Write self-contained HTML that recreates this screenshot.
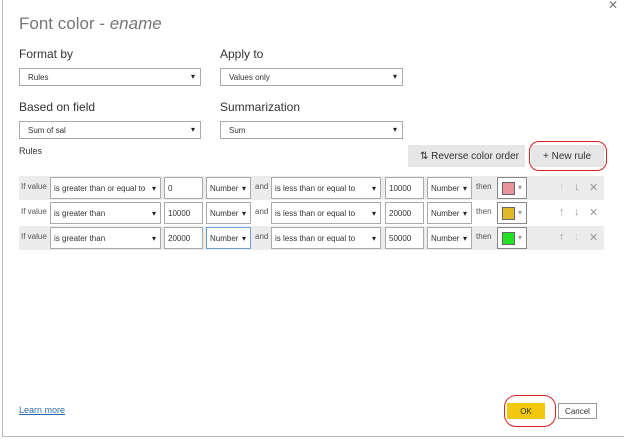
<html><head><style>
body{margin:0;width:624px;height:440px;background:#fff;font-family:"Liberation Sans",sans-serif;position:relative;overflow:hidden;color:#333}
div,span{position:absolute;box-sizing:border-box}
.lbl{font-size:12px;color:#333}
.dd{border:1px solid #aaa;background:#fff;font-size:8px;padding:4px 0 0 8px;color:#333;height:18px}
.dd:after{content:"▾";position:absolute;right:5px;top:3px;font-size:8px;color:#222}
.sm{border:1px solid #aaa;background:#fff;font-size:8px;color:#333;height:22px;padding:6px 0 0 3px;top:1px}
.sm.d:after{content:"▾";position:absolute;right:4px;top:6px;font-size:8px;color:#222}
.row{left:19px;width:585px;height:24px}
.t{font-size:8px;color:#555;top:6px}
.sw{width:30px;height:22px;top:1px;border:1px solid #888;background:#fff}
.sw i{position:absolute;left:4px;top:4px;width:11px;height:11px;border:1px solid #666}
.sw:after{content:"▾";position:absolute;right:4px;top:5px;font-size:8px;color:#999}
.ar{font-size:11px;top:5px;color:#999}
</style></head><body>
<div style="left:2px;top:0;width:1px;height:437px;background:#bbb"></div>
<div style="left:2px;top:436px;width:622px;height:1px;background:#bbb"></div>
<div style="left:608px;top:-2px;font-size:12px;color:#777">✕</div>
<div style="left:19px;top:14px;font-size:17px;color:#777">Font color - <i>ename</i></div>
<div class="lbl" style="left:19px;top:47px">Format by</div>
<div class="lbl" style="left:220px;top:47px">Apply to</div>
<div class="dd" style="left:19px;top:68px;width:182px">Rules</div>
<div class="dd" style="left:220px;top:68px;width:183px">Values only</div>
<div class="lbl" style="left:19px;top:100px">Based on field</div>
<div class="lbl" style="left:220px;top:100px">Summarization</div>
<div class="dd" style="left:19px;top:121px;width:182px">Sum of sal</div>
<div class="dd" style="left:220px;top:121px;width:183px">Sum</div>
<div style="left:19px;top:146px;font-size:9px">Rules</div>
<div style="left:408px;top:145px;width:117px;height:22px;background:#e6e6e6;font-size:10px;padding:6px 0 0 12px;color:#333">⇅ Reverse color order</div>
<div style="left:531px;top:145px;width:73px;height:22px;background:#e6e6e6;font-size:10px;padding:6px 0 0 12px;color:#333">+ New rule</div>
<div style="left:529px;top:141px;width:78px;height:30px;border:1.5px solid #d22;border-radius:10px"></div>

<div class="row" style="top:176px;background:#ececec">
<span class="t" style="left:2px">If value</span>
<div class="sm d" style="left:31px;width:111px">is greater than or equal to</div>
<div class="sm" style="left:145px;width:39px">0</div>
<div class="sm d" style="left:187px;width:45px">Number</div>
<span class="t" style="left:236px">and</span>
<div class="sm d" style="left:252px;width:110px">is less than or equal to</div>
<div class="sm" style="left:366px;width:39px">10000</div>
<div class="sm d" style="left:408px;width:45px">Number</div>
<span class="t" style="left:457px">then</span>
<div class="sw" style="left:478px"><i style="background:#e8939b"></i></div>
<span class="ar" style="left:540px;color:#ccc">↑</span><span class="ar" style="left:555px">↓</span><span class="ar" style="left:570px">✕</span>
</div>
<div class="row" style="top:201px;background:#fff">
<span class="t" style="left:2px">If value</span>
<div class="sm d" style="left:31px;width:111px">is greater than</div>
<div class="sm" style="left:145px;width:39px">10000</div>
<div class="sm d" style="left:187px;width:45px">Number</div>
<span class="t" style="left:236px">and</span>
<div class="sm d" style="left:252px;width:110px">is less than or equal to</div>
<div class="sm" style="left:366px;width:39px">20000</div>
<div class="sm d" style="left:408px;width:45px">Number</div>
<span class="t" style="left:457px">then</span>
<div class="sw" style="left:478px"><i style="background:#e0b82a"></i></div>
<span class="ar" style="left:540px">↑</span><span class="ar" style="left:555px">↓</span><span class="ar" style="left:570px">✕</span>
</div>
<div class="row" style="top:226px;background:#ececec">
<span class="t" style="left:2px">If value</span>
<div class="sm d" style="left:31px;width:111px">is greater than</div>
<div class="sm" style="left:145px;width:39px">20000</div>
<div class="sm d" style="left:187px;width:45px;border-color:#6a9fd8">Number</div>
<span class="t" style="left:236px">and</span>
<div class="sm d" style="left:252px;width:110px">is less than or equal to</div>
<div class="sm" style="left:366px;width:39px">50000</div>
<div class="sm d" style="left:408px;width:45px">Number</div>
<span class="t" style="left:457px">then</span>
<div class="sw" style="left:478px"><i style="background:#22e022"></i></div>
<span class="ar" style="left:540px">↑</span><span class="ar" style="left:555px;color:#ccc">↓</span><span class="ar" style="left:570px">✕</span>
</div>

<div style="left:19px;top:405px;font-size:9px;color:#2a6bb5;text-decoration:underline">Learn more</div>
<div style="left:507px;top:403px;width:38px;height:16px;background:#f2c80f;font-size:8px;text-align:center;padding-top:4px;color:#333">OK</div>
<div style="left:504px;top:395px;width:52px;height:32px;border:1.5px solid #d22;border-radius:12px"></div>
<div style="left:558px;top:403px;width:39px;height:16px;border:1px solid #999;background:#fff;font-size:8px;text-align:center;padding-top:3px;color:#333">Cancel</div>
</body></html>
